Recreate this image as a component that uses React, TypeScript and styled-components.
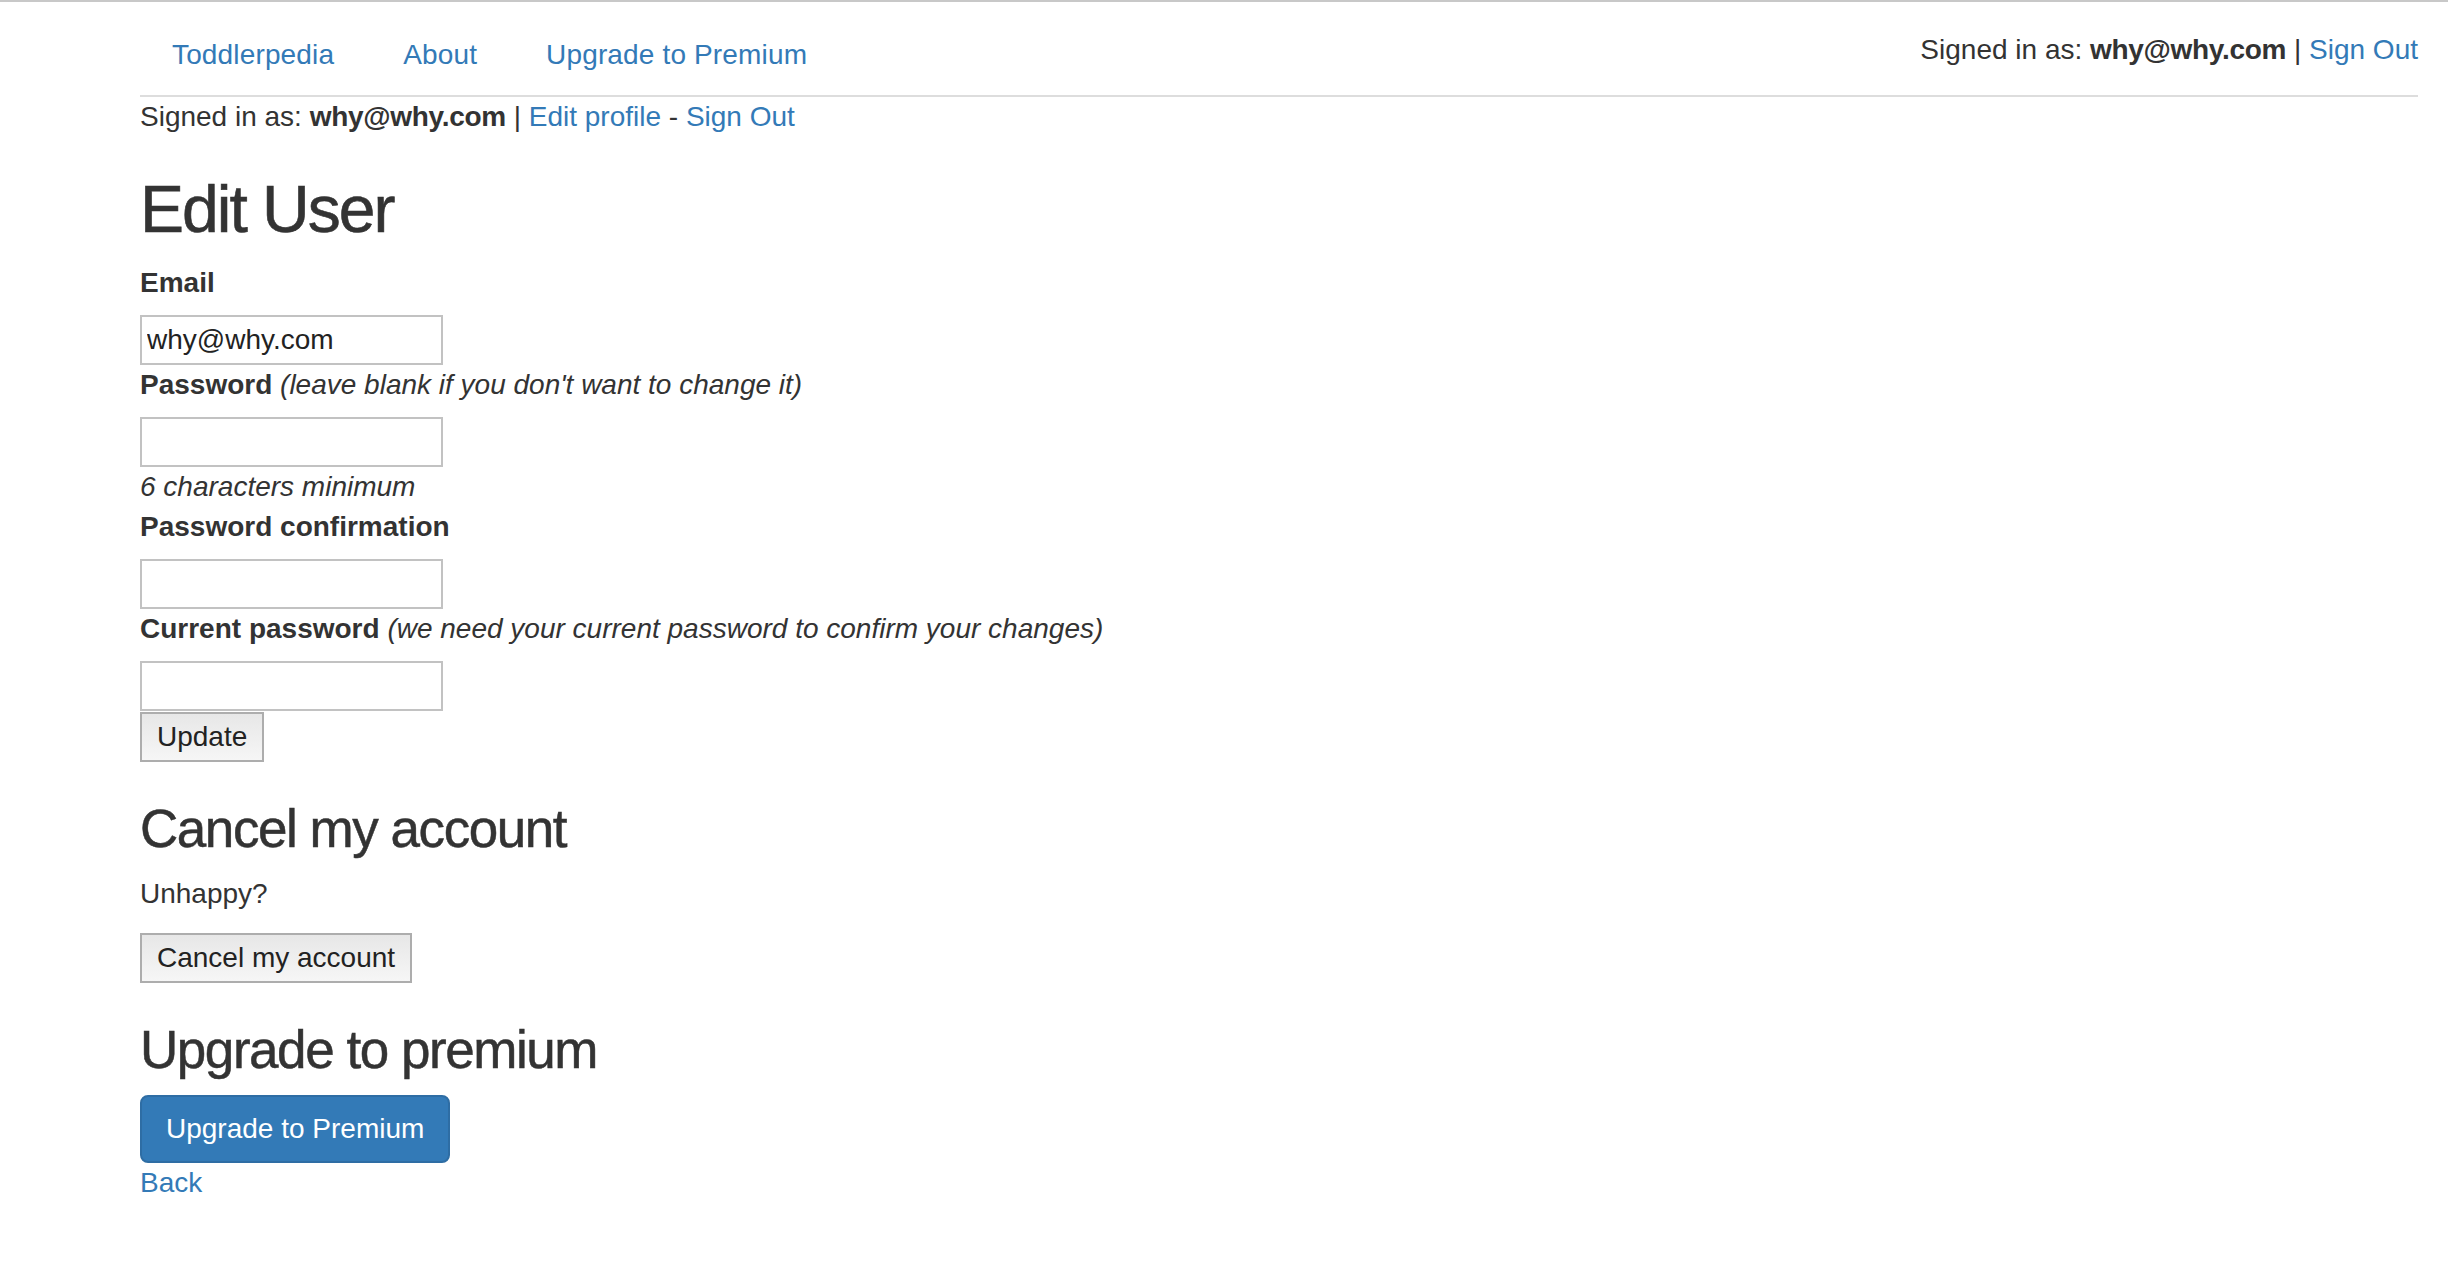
import React from "react";
import styled, { createGlobalStyle } from "styled-components";

const GlobalStyle = createGlobalStyle`
  html, body {
    margin: 0;
    padding: 0;
    background: #ffffff;
  }
  body {
    font-family: "Liberation Sans", Arial, Helvetica, sans-serif;
    font-size: 28px;
    line-height: 40px;
    color: #333333;
  }
  * { box-sizing: border-box; }
`;

const Page = styled.div`
  border-top: 2px solid #c8c8c8;
  padding: 0 30px 40px 140px;
  min-height: 1264px;
`;

const NavTabs = styled.nav`
  display: flex;
  align-items: flex-start;
  margin-top: 11px;
  border-bottom: 2px solid #dddddd;
`;

const NavLink = styled.a`
  display: block;
  padding: 20px 30px;
  border: 2px solid transparent;
  margin: 0 5px -2px 0;
  color: #337ab7;
  text-decoration: none;
  line-height: 40px;
  letter-spacing: 0.15px;
`;

const NavRight = styled.div`
  margin-left: auto;
  margin-top: 17px;
  line-height: 40px;
  white-space: nowrap;
`;

const Link = styled.a`
  color: #337ab7;
  text-decoration: none;
`;

const Strong = styled.strong`
  font-weight: bold;
  letter-spacing: -0.3px;
`;

const Line = styled.p`
  margin: 0;
  line-height: 40px;
`;

const Title = styled.h1`
  margin: 36px 0 17px;
  font-size: 66px;
  line-height: 1.1;
  font-weight: 500;
  letter-spacing: -2px;
  color: #333333;
  -webkit-text-stroke: 0.6px #333333;
`;

const Subtitle = styled.h2`
  margin: 38px 0 16px;
  font-size: 53px;
  line-height: 1.1;
  font-weight: 500;
  letter-spacing: -1.45px;
  color: #333333;
  -webkit-text-stroke: 0.5px #333333;
`;

const Form = styled.form`
  display: flex;
  flex-direction: column;
  align-items: flex-start;
`;

const Label = styled.label`
  display: block;
  font-weight: bold;
  line-height: 40px;
  margin-bottom: 12px;
`;

const Note = styled.em`
  font-weight: normal;
  font-style: italic;
`;

const Hint = styled.em`
  display: block;
  font-style: italic;
  line-height: 40px;
`;

const TextInput = styled.input`
  display: block;
  width: 303px;
  height: 50px;
  margin: 0;
  padding: 0 5px;
  border: 2px solid #c2c2c2;
  border-radius: 0;
  background: #ffffff;
  font-family: "Liberation Sans", Arial, Helvetica, sans-serif;
  font-size: 28px;
  color: #222222;
  outline: none;
`;

const PlainButton = styled.button<{ $top?: number }>`
  display: block;
  margin: ${(p) => p.$top ?? 0}px 0 0;
  padding: 3px 15px;
  border: 2px solid #adadad;
  border-radius: 0;
  background: linear-gradient(#e7e7e7, #f6f6f6);
  font-family: "Liberation Sans", Arial, Helvetica, sans-serif;
  font-size: 28px;
  line-height: 40px;
  color: #222222;
  cursor: pointer;
`;

const PrimaryButton = styled.button`
  display: block;
  margin: 0;
  padding: 12px 24px;
  border: 2px solid #2e6da4;
  border-radius: 8px;
  background: #337ab7;
  font-family: "Liberation Sans", Arial, Helvetica, sans-serif;
  font-size: 28px;
  line-height: 40px;
  color: #ffffff;
  cursor: pointer;
`;

const Paragraph = styled.p`
  margin: 0 0 19px;
  line-height: 40px;
`;

export default function App() {
  return (
    <>
      <GlobalStyle />
      <Page>
        <NavTabs>
          <NavLink href="#">Toddlerpedia</NavLink>
          <NavLink href="#">About</NavLink>
          <NavLink href="#">Upgrade to Premium</NavLink>
          <NavRight>
            Signed in as: <Strong>why@why.com</Strong> |{" "}
            <Link href="#">Sign Out</Link>
          </NavRight>
        </NavTabs>
        <Line>
          Signed in as: <Strong>why@why.com</Strong> |{" "}
          <Link href="#">Edit profile</Link> - <Link href="#">Sign Out</Link>
        </Line>

        <Title>Edit User</Title>

        <Form onSubmit={(e) => e.preventDefault()}>
          <Label htmlFor="email">Email</Label>
          <TextInput id="email" type="email" defaultValue="why@why.com" />

          <Label htmlFor="password">
            Password <Note>(leave blank if you don't want to change it)</Note>
          </Label>
          <TextInput id="password" type="password" />
          <Hint>6 characters minimum</Hint>

          <Label htmlFor="password_confirmation">Password confirmation</Label>
          <TextInput id="password_confirmation" type="password" />

          <Label htmlFor="current_password">
            Current password{" "}
            <Note>(we need your current password to confirm your changes)</Note>
          </Label>
          <TextInput id="current_password" type="password" />

          <PlainButton type="submit" $top={1}>
            Update
          </PlainButton>
        </Form>

        <Subtitle>Cancel my account</Subtitle>
        <Paragraph>Unhappy?</Paragraph>
        <PlainButton type="button">Cancel my account</PlainButton>

        <Subtitle>Upgrade to premium</Subtitle>
        <PrimaryButton type="button">Upgrade to Premium</PrimaryButton>
        <Line>
          <Link href="#">Back</Link>
        </Line>
      </Page>
    </>
  );
}
